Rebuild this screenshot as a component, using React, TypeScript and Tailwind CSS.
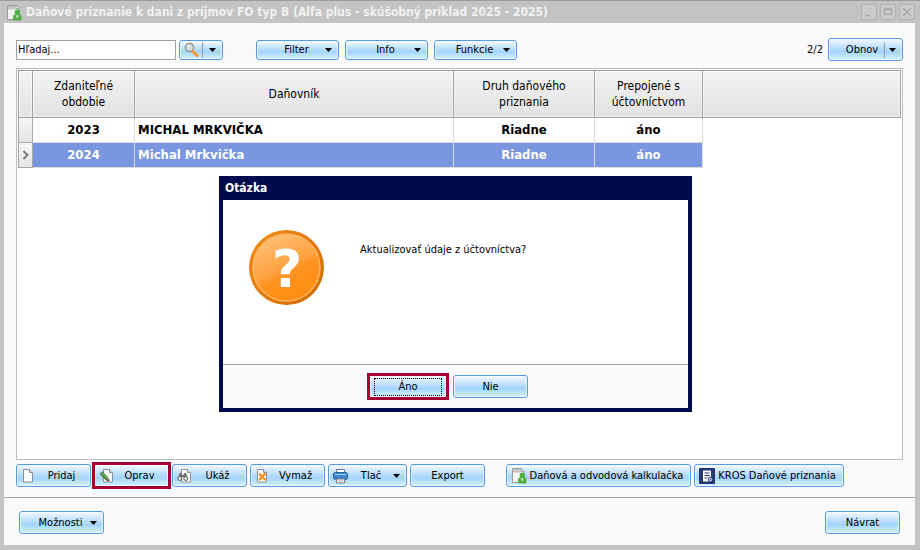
import type { ButtonHTMLAttributes, ReactNode } from 'react';
import { clsx } from 'clsx';

type TaxReturn = {
  period: string;
  taxpayer: string;
  kind: string;
  linked: string;
};

const taxReturns: TaxReturn[] = [
  { period: '2023', taxpayer: 'MICHAL MRKVIČKA', kind: 'Riadne', linked: 'áno' },
  { period: '2024', taxpayer: 'Michal Mrkvička', kind: 'Riadne', linked: 'áno' },
];

const selectedPeriod = '2024';

function DocumentPersonIcon() {
  return (
    <svg width="16" height="17" viewBox="0 0 16 17" className="shrink-0" aria-hidden="true">
      <path d="M1.5 1.5h9l2.500 2.500v11.500h-11.500z" fill="#f4f4f4" stroke="#9a9a9a" />
      <path d="M2 2h7.500v3.500H2z" fill="#c4c4c4" />
      <path d="M10 1.500v3h2.500" fill="#fff" stroke="#a0a0a0" />
      <circle cx="11.300" cy="8.200" r="2.600" fill="#4caf3f" />
      <path d="M7 16.500v-3.500c0-2.200 1.500-3 4.300-3s4.200.8 4.200 3v3.500z" fill="#4caf3f" />
      <path d="M10.600 11h1.400l.3 2-1 1.300-1-1.300z" fill="#d9f2d4" />
    </svg>
  );
}

function SearchIcon() {
  return (
    <svg width="16" height="16" viewBox="0 0 16 16" className="shrink-0" aria-hidden="true">
      <path d="M8.500 9l4.500 4.500" stroke="#f29a2e" strokeWidth="3" strokeLinecap="round" />
      <circle cx="5.500" cy="5.500" r="4" fill="#d9dcdf" stroke="#9a9a9a" strokeWidth="1.600" />
      <path d="M3.500 5a2.200 2.200 0 0 1 2-1.700" fill="none" stroke="#fff" />
    </svg>
  );
}

function PageShape() {
  return (
    <>
      <path d="M4.500 1.500h6l3 3v9.500h-9z" fill="#fcfcfc" stroke="#8f8f8f" />
      <path d="M10.500 1.500v3h3" fill="#e4e4e4" stroke="#8f8f8f" />
    </>
  );
}

function AddIcon() {
  return (
    <svg width="16" height="16" viewBox="0 0 16 16" className="shrink-0" aria-hidden="true">
      <path d="M2.500 1.500h6l3 3v9.500h-9z" fill="#fcfcfc" stroke="#8f8f8f" />
      <path d="M8.500 1.500v3h3" fill="#e4e4e4" stroke="#8f8f8f" />
    </svg>
  );
}

function EditIcon() {
  return (
    <svg width="16" height="16" viewBox="0 0 16 16" className="shrink-0" aria-hidden="true">
      <PageShape />
      <path d="M2 4.500l6.500 7" stroke="#3f6b3a" strokeWidth="3.400" />
      <path d="M2.300 4.500l6.200 6.500" stroke="#6bbf52" strokeWidth="1.400" />
      <path d="M7.500 12.800l2.300-2.400 1 3.400z" fill="#5a5a5a" />
    </svg>
  );
}

function ShowIcon() {
  return (
    <svg width="16" height="16" viewBox="0 0 16 16" className="shrink-0" aria-hidden="true">
      <PageShape />
      <path d="M2.500 5h2l.8 2h1l.8-2h2l1.600 5.500H6.700V9H5v1.500H1z" fill="#6d7470" />
      <circle cx="2.800" cy="10.500" r="2" fill="#dfe6e2" stroke="#59605c" />
      <circle cx="8.800" cy="10.500" r="2" fill="#dfe6e2" stroke="#59605c" />
    </svg>
  );
}

function DeleteIcon() {
  return (
    <svg width="16" height="16" viewBox="0 0 16 16" className="shrink-0" aria-hidden="true">
      <path d="M2.500 1.500h6l3 3v9.500h-9z" fill="#fcfcfc" stroke="#8f8f8f" />
      <path d="M8.500 1.500v3h3" fill="#e4e4e4" stroke="#8f8f8f" />
      <path d="M4 5.500l6.500 6.500M10.500 5.500l-6.500 6.500" stroke="#f08a1d" strokeWidth="2.200" />
    </svg>
  );
}

function PrinterIcon() {
  return (
    <svg width="16" height="16" viewBox="0 0 16 16" className="shrink-0" aria-hidden="true">
      <path d="M3.500 5V1.500h8V5" fill="#fff" stroke="#777" />
      <rect x="0.500" y="4.500" width="14" height="7" rx="2" fill="#3b87cf" stroke="#24609f" />
      <path d="M2 6.500h11" stroke="#9fd0f7" />
      <path d="M3.500 11h8v4h-8z" fill="#fff" stroke="#777" />
      <path d="M5 13h5" stroke="#aaa" />
    </svg>
  );
}

function KrosIcon() {
  return (
    <svg width="16" height="16" viewBox="0 0 16 16" className="shrink-0" aria-hidden="true">
      <rect width="16" height="16" rx="1" fill="#24356f" />
      <path d="M4 2.500h8v9l-1 2H4z" fill="#fff" />
      <path d="M5.500 5h5M5.500 7.500h5M5.500 10h3" stroke="#24356f" />
      <circle cx="11.500" cy="11.500" r="2.200" fill="#dfe4f2" stroke="#24356f" />
      <circle cx="11.500" cy="11.500" r=".8" fill="#24356f" />
    </svg>
  );
}

function QuestionIcon() {
  return (
    <svg width="75" height="75" viewBox="0 0 75 75" className="shrink-0" aria-hidden="true">
      <defs>
        <linearGradient id="rim" x1="0" y1="0" x2="1" y2="1">
          <stop offset="0" stopColor="#f58a17" />
          <stop offset="1" stopColor="#cf6a00" />
        </linearGradient>
        <linearGradient id="disc" x1="0.200" y1="0" x2="0.700" y2="1">
          <stop offset="0" stopColor="#ffc27a" />
          <stop offset="0.500" stopColor="#ffa240" />
          <stop offset="0.600" stopColor="#ff9420" />
          <stop offset="1" stopColor="#ff8c12" />
        </linearGradient>
      </defs>
      <circle cx="37.500" cy="37.500" r="37.500" fill="url(#rim)" />
      <circle cx="37.500" cy="37.500" r="33.500" fill="url(#disc)" stroke="#ffb45e" strokeWidth="1.500" />
      <text
        x="38"
        y="57"
        textAnchor="middle"
        fill="#fff"
        className="font-['DejaVu_Sans',sans-serif] text-[52px] font-bold"
      >
        ?
      </text>
    </svg>
  );
}

function Caret() {
  return (
    <svg width="7" height="4" viewBox="0 0 7 4" className="shrink-0" aria-hidden="true">
      <path d="M0 0h7L3.500 4z" fill="#000" />
    </svg>
  );
}

type GlossyButtonProps = ButtonHTMLAttributes<HTMLButtonElement> & {
  icon?: ReactNode;
  caret?: boolean;
  split?: boolean;
  highlighted?: boolean;
};

function GlossyButton({ icon, caret, split, highlighted, className, children, ...props }: GlossyButtonProps) {
  return (
    <button
      type="button"
      className={clsx(
        'flex shrink-0 items-center border border-[#559be3] bg-linear-to-b from-[#edf6ff] from-5% via-[#a3d4fb] via-60% to-[#d5f3ff] inset-ring inset-ring-white/60',
        highlighted ? 'relative z-10 outline-3 -outline-offset-1 outline-[#a50034]' : 'rounded-[3px]',
        caret ? 'pr-[6px]' : 'pr-1',
        caret && !icon && children ? 'pl-[11px]' : 'pl-1',
        className,
      )}
      {...props}
    >
      {icon}
      {children && <span className="flex-1 text-center whitespace-nowrap">{children}</span>}
      {split && <span className="mr-1 h-4 w-px bg-[#8f9aa6]" />}
      {caret && <Caret />}
    </button>
  );
}

function TitleBar() {
  const controls = [
    { label: 'Minimalizovať', d: 'M4 11.500h5' },
    { label: 'Maximalizovať', d: 'M4.500 4.500h7v6h-7zM4.500 5.500h7' },
    { label: 'Zavrieť', d: 'M4 4l8 8M12 4l-8 8' },
  ];

  return (
    <header className="flex h-[23px] items-center gap-1 border-t border-[#9c9ca6] pr-[5px] pl-[6px]">
      <DocumentPersonIcon />
      <h1 className="flex-1 truncate text-[12px] font-bold text-[#f1f1f1]">
        Daňové priznanie k dani z príjmov FO typ B (Alfa plus - skúšobný príklad 2025 - 2025)
      </h1>
      <div className="flex gap-[3px]">
        {controls.map((control) => (
          <button
            key={control.label}
            type="button"
            aria-label={control.label}
            className="size-4 rounded-[2px] border border-[#b2b2b2] bg-[#cbcbcb]"
          >
            <svg viewBox="1 1 14 14" className="size-full" aria-hidden="true">
              <path d={control.d} fill="none" stroke="#aaa" strokeWidth="1.600" />
            </svg>
          </button>
        ))}
      </div>
    </header>
  );
}

function Toolbar() {
  return (
    <div className="flex items-center px-3 pt-[15px] pb-[7px]">
      <input
        type="text"
        aria-label="Hľadaj"
        defaultValue="Hľadaj..."
        className="h-5 w-40 border border-[#a0a0a0] bg-white px-px outline-none"
      />
      <GlossyButton icon={<SearchIcon />} caret split aria-label="Hľadať" className="ml-[3px] h-5 w-11 justify-between" />
      <div className="ml-[33px] flex gap-[6px]">
        <GlossyButton caret className="h-5 w-[83px]">
          Filter
        </GlossyButton>
        <GlossyButton caret className="h-5 w-[83px]">
          Info
        </GlossyButton>
        <GlossyButton caret className="h-5 w-[83px]">
          Funkcie
        </GlossyButton>
      </div>
      <span className="mr-[5px] ml-auto">2/2</span>
      <GlossyButton caret split className="h-[23px] w-[75px]">
        Obnov
      </GlossyButton>
    </div>
  );
}

function TaxReturnTable() {
  const headCell =
    'border-r border-b border-[#a0a0a0] bg-linear-to-b from-[#f3f3f3] to-[#e2e2e2] px-1 font-normal inset-ring inset-ring-white/50';

  return (
    <div className="mx-3 flex-1 border border-[#bdbdbd] bg-white p-px">
      <table className="w-full table-fixed border-separate border-spacing-0 border-l border-[#a0a0a0] text-[13px]">
        <colgroup>
          <col className="w-[14px]" />
          <col className="w-[102px]" />
          <col className="w-[319px]" />
          <col className="w-[141px]" />
          <col className="w-[108px]" />
          <col />
        </colgroup>
        <thead>
          <tr className="h-12 text-[12px] leading-4 [&>th]:border-t">
            <th className={headCell} />
            <th className={headCell}>Zdaniteľné obdobie</th>
            <th className={headCell}>Daňovník</th>
            <th className={headCell}>Druh daňového priznania</th>
            <th className={headCell}>Prepojené s účtovníctvom</th>
            <th className={headCell} />
          </tr>
        </thead>
        <tbody>
          {taxReturns.map((row) => {
            const selected = row.period === selectedPeriod;
            const cell = clsx('border-r border-b border-[#dcdcdc]', selected && 'bg-[#7a96df] text-white');

            return (
              <tr key={row.period} className="h-[25px] font-bold">
                <td className="border-r border-b border-[#a8a8a8] bg-linear-to-b from-[#f6f6f6] to-[#e4e4e4]">
                  {selected && (
                    <svg width="13" height="10" viewBox="0 0 13 10" aria-hidden="true">
                      <path d="M4.500 1l4 4-4 4" fill="none" stroke="#777" strokeWidth="1.800" />
                    </svg>
                  )}
                </td>
                <td className={clsx(cell, 'text-center')}>{row.period}</td>
                <td className={clsx(cell, 'pl-[3px]')}>{row.taxpayer}</td>
                <td className={clsx(cell, 'text-center')}>{row.kind}</td>
                <td className={clsx(cell, 'text-center')}>{row.linked}</td>
                <td />
              </tr>
            );
          })}
        </tbody>
      </table>
    </div>
  );
}

function ActionBar() {
  return (
    <div className="flex gap-[3px] border-b border-[#a3a3a3] px-3 pt-1 pb-[10px]">
      <GlossyButton icon={<AddIcon />} className="h-[23px] w-[75px]">
        Pridaj
      </GlossyButton>
      <GlossyButton icon={<EditIcon />} highlighted className="h-[23px] w-[75px]">
        Oprav
      </GlossyButton>
      <GlossyButton icon={<ShowIcon />} className="h-[23px] w-[75px]">
        Ukáž
      </GlossyButton>
      <GlossyButton icon={<DeleteIcon />} className="h-[23px] w-[75px]">
        Vymaž
      </GlossyButton>
      <GlossyButton icon={<PrinterIcon />} caret className="h-[23px] w-[79px]">
        Tlač
      </GlossyButton>
      <GlossyButton className="h-[23px] w-[75px]">Export</GlossyButton>
      <GlossyButton icon={<DocumentPersonIcon />} className="ml-[18px] h-[23px] w-[185px]">
        Daňová a odvodová kalkulačka
      </GlossyButton>
      <GlossyButton icon={<KrosIcon />} className="h-[23px] w-[150px]">
        KROS Daňové priznania
      </GlossyButton>
    </div>
  );
}

function QuestionDialog() {
  return (
    <section
      role="dialog"
      aria-labelledby="question-title"
      className="absolute top-[176px] left-[219px] w-[473px] border-4 border-t-0 border-[#000a4c] bg-white"
    >
      <h2 id="question-title" className="h-6 bg-[#000a4c] pl-[2px] text-[12px] leading-6 font-bold text-white">
        Otázka
      </h2>
      <div className="flex h-[164px] gap-9 pt-[30px] pl-[26px]">
        <QuestionIcon />
        <p className="pt-3">Aktualizovať údaje z účtovníctva?</p>
      </div>
      <div className="flex justify-center gap-[6px] border-t border-[#a3a3ab] bg-[#fafafa] py-[10px] pr-[14px]">
        <GlossyButton highlighted className="h-[23px] w-[78px]">
          <span className="block border border-dotted border-black leading-4">Áno</span>
        </GlossyButton>
        <GlossyButton className="h-[23px] w-[75px]">Nie</GlossyButton>
      </div>
    </section>
  );
}

export default function App() {
  return (
    <div className="relative flex min-h-screen flex-col bg-[#c3c3c3] font-['DejaVu_Sans_Condensed','DejaVu_Sans',sans-serif] text-[11px] leading-4 text-black">
      <TitleBar />
      <main className="mr-[5px] mb-[5px] ml-1 flex flex-1 flex-col bg-[#fafafa]">
        <Toolbar />
        <TaxReturnTable />
        <ActionBar />
        <footer className="flex items-center justify-between px-[15px] pt-[13px] pb-[11px]">
          <GlossyButton caret className="h-[23px] w-[85px]">
            Možnosti
          </GlossyButton>
          <GlossyButton className="h-[23px] w-[75px]">Návrat</GlossyButton>
        </footer>
      </main>
      <QuestionDialog />
    </div>
  );
}
